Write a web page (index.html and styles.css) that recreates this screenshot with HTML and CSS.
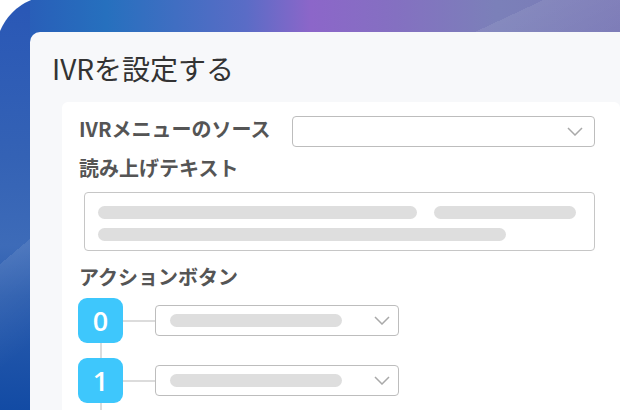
FILE: index.html
```html
<!DOCTYPE html>
<html lang="ja">
<head>
<meta charset="utf-8">
<title>IVRを設定する</title>
<link rel="stylesheet" href="styles.css">
</head>
<body>
<div class="frame">
  <div class="card">
    <h1 class="title">IVRを設定する</h1>
    <div class="panel">
      <div class="source-row">
        <span class="label">IVRメニューのソース</span>
        <div class="select select-wide">
          <svg class="chev" viewBox="0 0 16 9"><polyline points="1,1 8,8 15,1"/></svg>
        </div>
      </div>
      <div class="label label-tts">読み上げテキスト</div>
      <div class="textbox">
        <div class="line"><span class="bar bar-a"></span><span class="bar bar-b"></span></div>
        <div class="line"><span class="bar bar-c"></span></div>
      </div>
      <div class="label label-actions">アクションボタン</div>
      <ul class="actions">
        <li class="action">
          <span class="key">0</span>
          <span class="link"></span>
          <div class="select select-action">
            <span class="bar bar-short"></span>
            <svg class="chev" viewBox="0 0 16 9"><polyline points="1,1 8,8 15,1"/></svg>
          </div>
        </li>
        <li class="action">
          <span class="key">1</span>
          <span class="link"></span>
          <div class="select select-action">
            <span class="bar bar-short"></span>
            <svg class="chev" viewBox="0 0 16 9"><polyline points="1,1 8,8 15,1"/></svg>
          </div>
        </li>
      </ul>
    </div>
  </div>
</div>
</body>
</html>
```
FILE: styles.css
```css
html, body {
  margin: 0;
  height: 100%;
  overflow: hidden;
  background: #fff;
}
body {
  font-family: "Noto Sans CJK JP", "Noto Sans", sans-serif;
}
.frame {
  margin: -4px 0 0 -4px;
  width: 680px;
  height: 440px;
  padding: 36px 0 0 34px;
  box-sizing: border-box;
  border-top-left-radius: 56px;
  background:
    linear-gradient(155deg, transparent 235px, rgba(255,255,255,.08) 235px, rgba(255,255,255,0) 330px) 0 0 / 680px 36px no-repeat,
    linear-gradient(140deg, transparent 208px, rgba(255,255,255,.09) 208px, rgba(255,255,255,0) 290px) 0 0 / 34px 440px no-repeat,
    linear-gradient(to bottom, #2957b6 0px, #3462b5 160px, #3d6bb8 250px, #2a5cae 300px, #0d47a2 440px) 0 0 / 34px 440px no-repeat,
    linear-gradient(90deg, #2a57b6 0px, #2670be 110px, #5a6cc6 250px, #8c66c9 315px, #8470c1 400px, #7b80b9 500px, #7a76b5 680px);
}
.card {
  background: #f7f8fa;
  border-top-left-radius: 10px;
  height: 100%;
  padding-top: 22px;
  box-sizing: border-box;
}
.title {
  margin: 0;
  padding-left: 22px;
  font-size: 28px;
  line-height: 28px;
  font-weight: 400;
  color: #333;
}
.panel {
  margin: 20px 0 0 32px;
  width: 558px;
  height: 330px;
  box-sizing: border-box;
  padding: 14px 25px 0 17px;
  background: #fff;
  border-radius: 6px 6px 0 0;
}
.source-row {
  display: flex;
  align-items: flex-start;
}
.label {
  font-size: 20px;
  line-height: 20px;
  font-weight: 700;
  color: #555;
}
.source-row .label {
  margin-top: 3px;
}
.select {
  height: 31px;
  box-sizing: border-box;
  border: 1px solid #bdbdbd;
  border-radius: 4px;
  background: #fff;
  display: flex;
  align-items: center;
}
.select-wide {
  width: 303px;
  margin-left: auto;
  justify-content: flex-end;
  padding-right: 11px;
}
.chev {
  width: 16px;
  height: 9px;
  flex: none;
}
.chev polyline {
  fill: none;
  stroke: #a9a9a9;
  stroke-width: 1.5;
}
.label-tts {
  margin-top: 11px;
}
.textbox {
  margin: 14px 0 0 5px;
  height: 59px;
  box-sizing: border-box;
  border: 1px solid #c6c6c6;
  border-radius: 4px;
  padding: 13px 0 0 13px;
}
.line {
  display: flex;
  gap: 17px;
}
.line + .line {
  margin-top: 9px;
}
.bar {
  display: block;
  height: 13px;
  border-radius: 7px;
  background: #dedede;
}
.bar-a { width: 319px; }
.bar-b { width: 142px; }
.bar-c { width: 408px; }
.bar-short { width: 172px; }
.label-actions {
  margin-top: 16px;
}
.actions {
  list-style: none;
  margin: 11px 0 0 -1px;
  padding: 0;
  position: relative;
  display: flex;
  flex-direction: column;
  gap: 15px;
}
.actions::before {
  content: "";
  position: absolute;
  left: 21.5px;
  top: 20px;
  bottom: -30px;
  width: 2px;
  background: #dcdcdc;
}
.action {
  display: flex;
  align-items: center;
}
.key {
  position: relative;
  z-index: 1;
  flex: none;
  width: 45px;
  height: 45px;
  border-radius: 9px;
  background: #3ec7fc;
  color: #fff;
  font-family: "Open Sans", sans-serif;
  font-weight: 600;
  font-size: 27px;
  line-height: 45px;
  text-align: center;
}
.link {
  flex: none;
  width: 32px;
  height: 2px;
  background: #dcdcdc;
}
.select-action {
  width: 244px;
  padding: 0 8px 0 14px;
  justify-content: space-between;
}
```
